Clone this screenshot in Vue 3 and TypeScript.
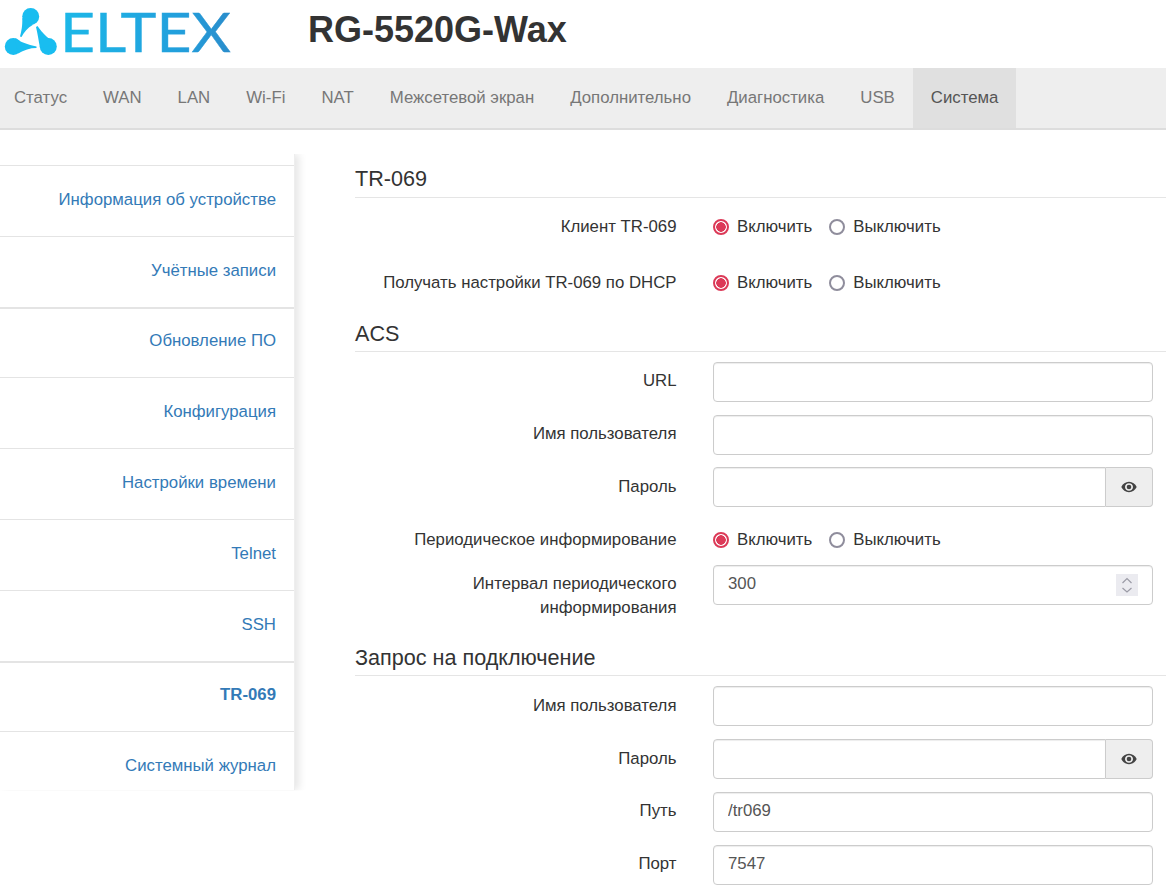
<script setup lang="ts">
const tabs: string[] = ['Статус', 'WAN', 'LAN', 'Wi-Fi', 'NAT', 'Межсетевой экран', 'Дополнительно', 'Диагностика', 'USB', 'Система']
const menu: string[] = ['Информация об устройстве', 'Учётные записи', 'Обновление ПО', 'Конфигурация', 'Настройки времени', 'Telnet', 'SSH', 'TR-069', 'Системный журнал']
</script>

<template>
  <div class="page">
    <header class="head">
      <svg class="logo" width="232" height="68" viewBox="0 0 232 68">
        <defs>
          <linearGradient id="lg" gradientUnits="userSpaceOnUse" x1="60" x2="232" y1="0" y2="0">
            <stop offset="0" stop-color="#1cb8e8" />
            <stop offset="0.7" stop-color="#229fdc" />
            <stop offset="1" stop-color="#2a8ccb" />
          </linearGradient>
        </defs>
        <g fill="#19bdf0">
          <circle cx="30.700" cy="16.500" r="8.500" />
          <circle cx="13.300" cy="46.500" r="8.500" />
          <circle cx="48.300" cy="46.500" r="8.500" />
          <path d="M22.300 18C22.500 26 21.500 31 20 36.500L21.500 37C24 32 27.500 28 33 24.700Z" />
          <path d="M15 38.200C20 42 28 44.500 36.500 46.500L36.500 48C30 48 24 50 18 53.500Z" />
          <path d="M56.500 44C50 40 42 33 37.500 26L36 27C37.500 33 38.500 40 40 48Z" />
        </g>
        <text x="60" y="52" class="wordmark" fill="url(#lg)" stroke="url(#lg)" stroke-width="0.400" textLength="171" lengthAdjust="spacingAndGlyphs">ELTEX</text>
      </svg>
      <h1 class="model">RG-5520G-Wax</h1>
    </header>

    <nav class="tabs">
      <a v-for="t in tabs" :key="t" class="tab" :class="{ on: t === 'Система' }">{{ t }}</a>
    </nav>

    <main class="main">
      <aside class="side">
        <a v-for="m in menu" :key="m" class="item" :class="{ cur: m === 'TR-069', thick: m === 'Обновление ПО' || m === 'TR-069', last: m === 'Системный журнал' }">{{ m }}</a>
      </aside>

      <section class="content">
        <h3 class="sec first">TR-069</h3>
        <div class="row tall">
          <label class="lab">Клиент TR-069</label>
          <div class="radios">
            <label class="rad"><input type="radio" name="a" checked />Включить</label>
            <label class="rad"><input type="radio" name="a" />Выключить</label>
          </div>
        </div>
        <div class="row tall">
          <label class="lab">Получать настройки TR-069 по DHCP</label>
          <div class="radios">
            <label class="rad"><input type="radio" name="b" checked />Включить</label>
            <label class="rad"><input type="radio" name="b" />Выключить</label>
          </div>
        </div>

        <h3 class="sec acs">ACS</h3>
        <div class="row">
          <label class="lab">URL</label>
          <input class="inp" type="text" />
        </div>
        <div class="row tight">
          <label class="lab">Имя пользователя</label>
          <input class="inp" type="text" />
        </div>
        <div class="row low">
          <label class="lab">Пароль</label>
          <div class="group">
            <input class="inp joined" type="password" />
            <span class="addon">
              <svg width="16" height="12" viewBox="0 0 16 12"><path d="M8 .8C4.600.8 1.700 2.900.3 6c1.400 3.100 4.300 5.200 7.700 5.200s6.300-2.100 7.700-5.200C14.300 2.900 11.400.8 8 .8zm0 9c-2.200 0-4-1.700-4-3.800s1.800-3.800 4-3.800 4 1.700 4 3.800-1.800 3.800-4 3.800z" fill="#444" /><circle cx="8" cy="6" r="2.300" fill="#444" /></svg>
            </span>
          </div>
        </div>
        <div class="row short">
          <label class="lab">Периодическое информирование</label>
          <div class="radios">
            <label class="rad"><input type="radio" name="c" checked />Включить</label>
            <label class="rad"><input type="radio" name="c" />Выключить</label>
          </div>
        </div>
        <div class="row">
          <label class="lab">Интервал периодического информирования</label>
          <div class="spinwrap">
            <input class="inp" type="text" value="300" />
            <span class="spin">
              <svg width="22" height="22" viewBox="0 0 22 22"><path d="M6.500 9 11 4.500 15.500 9M6.500 14 11 18 15.500 14" fill="none" stroke="#9b9ba6" stroke-width="1.200" /></svg>
            </span>
          </div>
        </div>

        <h3 class="sec req">Запрос на подключение</h3>
        <div class="row low">
          <label class="lab">Имя пользователя</label>
          <input class="inp" type="text" />
        </div>
        <div class="row low">
          <label class="lab">Пароль</label>
          <div class="group">
            <input class="inp joined" type="password" />
            <span class="addon">
              <svg width="16" height="12" viewBox="0 0 16 12"><path d="M8 .8C4.600.8 1.700 2.900.3 6c1.400 3.100 4.300 5.200 7.700 5.200s6.300-2.100 7.700-5.200C14.300 2.900 11.400.8 8 .8zm0 9c-2.200 0-4-1.700-4-3.800s1.800-3.800 4-3.800 4 1.700 4 3.800-1.800 3.800-4 3.800z" fill="#444" /><circle cx="8" cy="6" r="2.300" fill="#444" /></svg>
            </span>
          </div>
        </div>
        <div class="row">
          <label class="lab">Путь</label>
          <input class="inp" type="text" value="/tr069" />
        </div>
        <div class="row">
          <label class="lab">Порт</label>
          <input class="inp" type="text" value="7547" />
        </div>
      </section>
    </main>
  </div>
</template>

<style>
html, body { background: #fff; overflow: hidden; }
</style>

<style scoped>
.page {
  width: 1166px;
  height: 896px;
  overflow: hidden;
  font-family: "Liberation Sans", Arial, sans-serif;
  font-size: 16.8px;
  color: #333;
}
.head {
  height: 68px;
  display: flex;
  align-items: flex-start;
}
.logo { flex: none; display: block; }
.wordmark {
  font-family: "Lato", sans-serif;
  font-size: 54px;
  font-weight: 400;
}
.model {
  margin: 10px 0 0 76px;
  font-size: 36px;
  line-height: 40px;
  font-weight: 700;
  color: #333;
}
.tabs {
  height: 60px;
  background: #eee;
  border-bottom: 2px solid #ddd;
  display: flex;
}
.tab {
  padding: 0 18px;
  line-height: 60px;
  color: #777;
}
.tab:first-child { padding-left: 14px; }
.tab.on { background: #e0e0e0; color: #555; }
.main {
  display: flex;
  align-items: flex-start;
}
.side {
  width: 295px;
  margin-top: 24px;
  padding-top: 11px;
  box-sizing: border-box;
  border-right: 1px solid #eee;
  box-shadow: 4px 0 8px rgba(0, 0, 0, 0.1);
  clip-path: inset(0 -20px 0 0);
  flex: none;
}
.item {
  display: block;
  height: 70.800px;
  box-sizing: border-box;
  border-top: 1px solid #e4e4e4;
  padding: 24px 18px 0 0;
  line-height: 20px;
  text-align: right;
  color: #337ab7;
  white-space: nowrap;
}
.item.cur { font-weight: 700; }
.item.thick { border-top-width: 2px; padding-top: 22px; }
.item.last { height: 59px; }
.content {
  width: 811px;
  margin-left: 60px;
  flex: none;
}
.sec {
  margin: 0 0 10px;
  height: 31px;
  box-sizing: border-box;
  padding-bottom: 5px;
  border-bottom: 1px solid #e5e5e5;
  font-size: 21.600px;
  line-height: 25px;
  font-weight: 400;
  color: #333;
}
.sec.first { margin-top: 36px; margin-bottom: 11px; height: 32px; }
.sec.acs { margin-top: 1px; }
.sec.req { margin-top: 25px; }
.row {
  display: grid;
  grid-template-columns: 321.500px 440px;
  column-gap: 36.500px;
  align-items: start;
  margin-bottom: 13px;
}
.row.tight { margin-bottom: 12px; }
.row.tall { height: 43px; }
.row.short { height: 31px; margin-top: 15px; margin-bottom: 12px; }
.lab {
  padding-top: 7px;
  line-height: 24px;
  text-align: right;
  color: #333;
}
.row.short .lab, .row.tall .lab { padding-top: 6px; }
.row.low .lab { padding-top: 8px; }
.radios {
  display: flex;
  gap: 17px;
  padding-top: 6px;
  line-height: 24px;
}
.rad {
  display: flex;
  align-items: center;
  gap: 8px;
  color: #333;
}
.rad input {
  appearance: none;
  margin: 0;
  width: 16px;
  height: 16px;
  box-sizing: border-box;
  border-radius: 50%;
  border: 2px solid #8f8d9c;
  background: #fff;
}
.rad input:checked {
  border-color: #dc3a58;
  background: radial-gradient(circle, #dc3a58 0, #dc3a58 4.500px, #fff 5px);
}
.inp {
  display: block;
  width: 100%;
  height: 40px;
  box-sizing: border-box;
  padding: 0 14px 2px;
  border: 1px solid #ccc;
  border-radius: 4px;
  background: #fff;
  font: inherit;
  color: #555;
  outline: none;
  box-shadow: inset 0 1px 1px rgba(0, 0, 0, 0.075);
}
.group { display: flex; }
.joined {
  flex: 1;
  min-width: 0;
  border-radius: 4px 0 0 4px;
}
.addon {
  flex: none;
  width: 47px;
  height: 40px;
  box-sizing: border-box;
  border: 1px solid #ccc;
  border-left: 0;
  border-radius: 0 4px 4px 0;
  background: #eee;
  display: flex;
  align-items: center;
  justify-content: center;
}
.spinwrap { position: relative; }
.spin {
  position: absolute;
  left: 403px;
  top: 9px;
  width: 22px;
  height: 22px;
  background: #ebebf0;
  display: block;
}
.spin svg { display: block; }
</style>
